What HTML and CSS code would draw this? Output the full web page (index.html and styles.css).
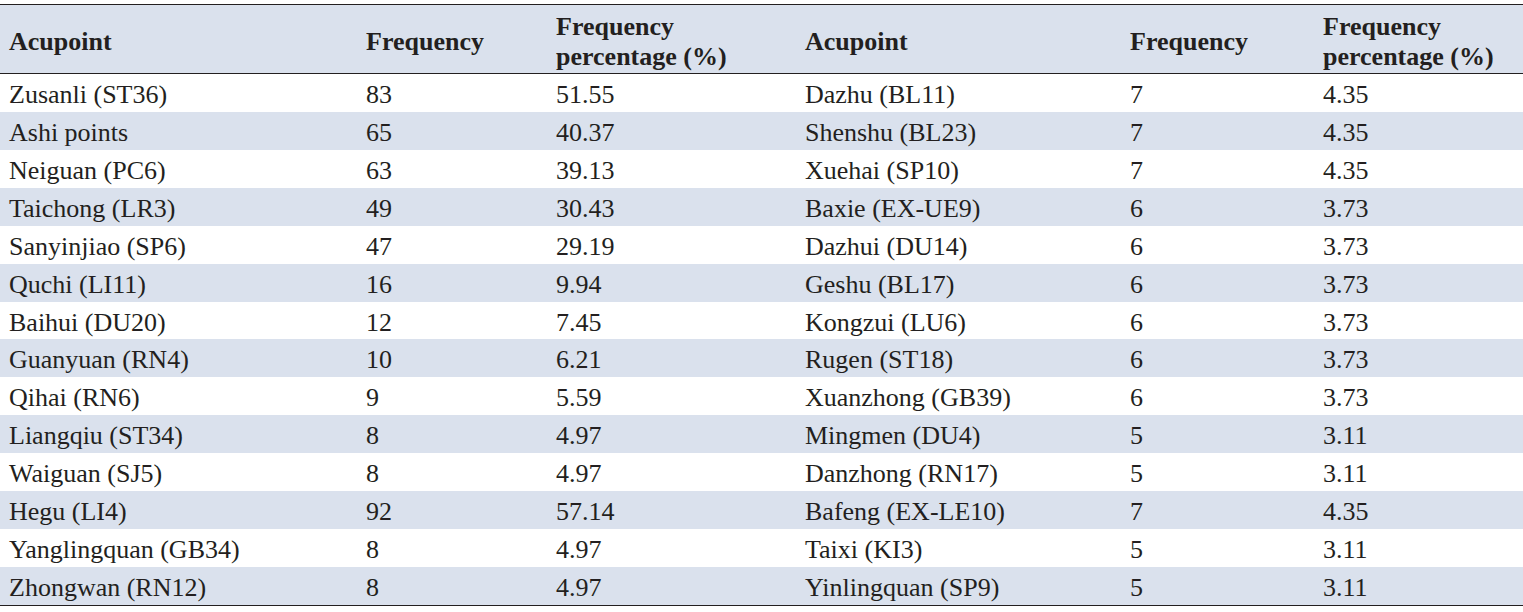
FILE: index.html
```html
<!DOCTYPE html>
<html lang="en">
<head>
<meta charset="utf-8">
<title>Acupoint frequency</title>
<link rel="stylesheet" href="styles.css">
</head>
<body>
<table class="freq-table">
  <colgroup>
    <col class="c1"><col class="c2"><col class="c3"><col class="c4"><col class="c5"><col class="c6">
  </colgroup>
  <thead>
    <tr>
      <th>Acupoint</th>
      <th>Frequency</th>
      <th>Frequency<br>percentage (%)</th>
      <th>Acupoint</th>
      <th>Frequency</th>
      <th>Frequency<br>percentage (%)</th>
    </tr>
  </thead>
  <tbody>
    <tr><td>Zusanli (ST36)</td><td>83</td><td>51.55</td><td>Dazhu (BL11)</td><td>7</td><td>4.35</td></tr>
    <tr><td>Ashi points</td><td>65</td><td>40.37</td><td>Shenshu (BL23)</td><td>7</td><td>4.35</td></tr>
    <tr><td>Neiguan (PC6)</td><td>63</td><td>39.13</td><td>Xuehai (SP10)</td><td>7</td><td>4.35</td></tr>
    <tr><td>Taichong (LR3)</td><td>49</td><td>30.43</td><td>Baxie (EX-UE9)</td><td>6</td><td>3.73</td></tr>
    <tr><td>Sanyinjiao (SP6)</td><td>47</td><td>29.19</td><td>Dazhui (DU14)</td><td>6</td><td>3.73</td></tr>
    <tr><td>Quchi (LI11)</td><td>16</td><td>9.94</td><td>Geshu (BL17)</td><td>6</td><td>3.73</td></tr>
    <tr><td>Baihui (DU20)</td><td>12</td><td>7.45</td><td>Kongzui (LU6)</td><td>6</td><td>3.73</td></tr>
    <tr><td>Guanyuan (RN4)</td><td>10</td><td>6.21</td><td>Rugen (ST18)</td><td>6</td><td>3.73</td></tr>
    <tr><td>Qihai (RN6)</td><td>9</td><td>5.59</td><td>Xuanzhong (GB39)</td><td>6</td><td>3.73</td></tr>
    <tr><td>Liangqiu (ST34)</td><td>8</td><td>4.97</td><td>Mingmen (DU4)</td><td>5</td><td>3.11</td></tr>
    <tr><td>Waiguan (SJ5)</td><td>8</td><td>4.97</td><td>Danzhong (RN17)</td><td>5</td><td>3.11</td></tr>
    <tr><td>Hegu (LI4)</td><td>92</td><td>57.14</td><td>Bafeng (EX-LE10)</td><td>7</td><td>4.35</td></tr>
    <tr><td>Yanglingquan (GB34)</td><td>8</td><td>4.97</td><td>Taixi (KI3)</td><td>5</td><td>3.11</td></tr>
    <tr><td>Zhongwan (RN12)</td><td>8</td><td>4.97</td><td>Yinlingquan (SP9)</td><td>5</td><td>3.11</td></tr>
  </tbody>
</table>
</body>
</html>
```

FILE: styles.css
```css
html, body {
  margin: 0;
  padding: 0;
  background: #ffffff;
}
body {
  padding-top: 4px;
  font-family: "Liberation Serif", "Times New Roman", serif;
  color: #231f20;
}
.freq-table {
  width: 1523px;
  border-collapse: collapse;
  table-layout: fixed;
  font-size: 26px;
  border-top: 1.5px solid #231f20;
  border-bottom: 1.5px solid #231f20;
}
.c1 { width: 357px; }
.c2 { width: 190px; }
.c3 { width: 249px; }
.c4 { width: 325px; }
.c5 { width: 193px; }
.c6 { width: 209px; }
.freq-table th {
  text-align: left;
  font-weight: bold;
  line-height: 30px;
  padding: 7px 9px 1px 9px;
  vertical-align: middle;
  background: #dae1ed;
  border-bottom: 1.5px solid #231f20;
}
.freq-table td {
  height: 37.93px;
  box-sizing: border-box;
  padding: 5px 9px 0 9px;
  line-height: 32.9px;
  vertical-align: top;
  white-space: nowrap;
}
.freq-table tbody tr:nth-child(even) td {
  background: #dae1ed;
}
```
